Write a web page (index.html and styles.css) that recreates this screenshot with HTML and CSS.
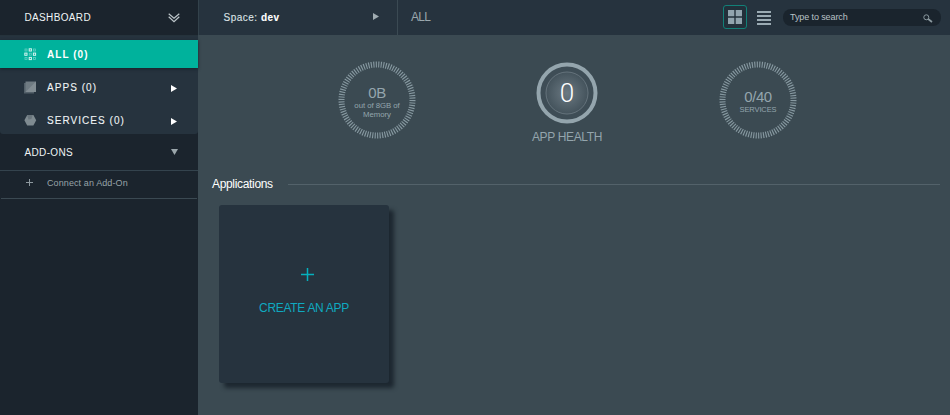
FILE: index.html
```html
<!DOCTYPE html>
<html lang="en">
<head>
<meta charset="utf-8">
<title>Dashboard</title>
<link rel="stylesheet" href="styles.css">
</head>
<body>
<div class="app">
  <nav class="sidebar">
    <div class="side-head">
      <span class="side-title">DASHBOARD</span>
      <svg class="chevrons" width="12" height="10" viewBox="0 0 12 10"><path d="M.7 .8 6 5.300 11.300 .8M.7 3.800 6 8.600 11.300 3.800"/></svg>
    </div>
    <div class="side-group">
      <a class="item active">
        <svg class="item-icon" width="13" height="13" viewBox="0 0 13 13">
          <g fill="none" stroke="#62cfc2" stroke-width=".8"><rect x="1" y="1" width="2" height="2"/><rect x="9.500" y="1" width="2" height="2"/><rect x="5.300" y="5.200" width="2" height="2"/><rect x="1" y="9.500" width="2" height="2"/><rect x="9.500" y="9.500" width="2" height="2"/></g>
          <g fill="none" stroke="#d5f5f1"><rect x="5.200" y=".8" width="2.200" height="2.200"/><rect x=".8" y="5.100" width="2.200" height="2.200"/><rect x="9.400" y="5.100" width="2.200" height="2.200"/><rect x="5.200" y="9.400" width="2.200" height="2.200"/></g>
        </svg>
        <span class="label">ALL (0)</span>
      </a>
      <a class="item">
        <svg class="item-icon" width="13" height="13" viewBox="0 0 13 13"><path fill="#536069" d="M0 2h2v9h8v1.500H0z"/><path fill="#6f7b82" d="M1.500 .5H12V11H1.500z"/><path fill="#828d93" d="M12 .5V11H1.500z"/></svg>
        <span class="label">APPS (0)</span>
        <svg class="arrow" width="6" height="7" viewBox="0 0 6 7"><path d="M0 0 6 3.500 0 7z"/></svg>
      </a>
      <a class="item">
        <svg class="item-icon" width="13" height="13" viewBox="0 0 13 13"><path fill="#7f8b91" d="M3.200 1h6.200l2.800 5.300L9.400 11.500H3.200L.4 6.300z"/><path fill="#69757c" d="M3.200 1h5.600L7.300 5 4.500 5.500 3.500 2.500z"/></svg>
        <span class="label">SERVICES (0)</span>
        <svg class="arrow" width="6" height="7" viewBox="0 0 6 7"><path d="M0 0 6 3.500 0 7z"/></svg>
      </a>
    </div>
    <div class="addons">
      <span class="side-title">ADD-ONS</span>
      <svg class="down" width="7" height="6" viewBox="0 0 7 6"><path d="M0 0h7L3.500 6z"/></svg>
    </div>
    <a class="connect">
      <svg width="7" height="7" viewBox="0 0 7 7"><path d="M3.500 0v7M0 3.500h7"/></svg>
      <span>Connect an Add-On</span>
    </a>
  </nav>
  <div class="main">
    <header class="topbar">
      <div class="space">
        <span class="space-name">Space: <b>dev</b></span>
        <svg width="6" height="7" viewBox="0 0 6 7"><path fill="#a0acb1" d="M0 0 6 3.500 0 7z"/></svg>
      </div>
      <span class="crumb">ALL</span>
      <button class="grid-btn" aria-label="Grid view"><svg width="14" height="14" viewBox="0 0 14 14"><path fill="#91a4ae" d="M0 0h6.300v6.300H0zM7.700 0H14v6.300H7.700zM0 7.700h6.300V14H0zM7.700 7.700H14V14H7.700z"/></svg></button>
      <svg class="list" width="14" height="14" viewBox="0 0 14 14"><path fill="#9babb3" d="M0 0h14v2H0zM0 4h14v2H0zM0 8h14v2H0zM0 12h14v2H0z"/></svg>
      <div class="search">
        <span>Type to search</span>
        <svg width="10" height="9" viewBox="0 0 10 9"><circle cx="3.300" cy="3.300" r="2.500"/><path d="M5.200 5 9 8" stroke-width="1.700"/></svg>
      </div>
    </header>
    <section class="stats">
      <div class="gauge">
        <svg width="78" height="78" viewBox="0 0 78 78"><circle class="ticks" cx="39" cy="39" r="35.500" pathLength="180"/></svg>
        <div class="gauge-text"><strong>0B</strong><span>out of 8GB of<br>Memory</span></div>
      </div>
      <div class="health">
        <div class="health-ring">
          <svg width="62" height="62" viewBox="0 0 62 62">
            <defs><radialGradient id="glow"><stop offset="0" stop-color="#6b7982"/><stop offset="1" stop-color="#44535c"/></radialGradient></defs>
            <circle cx="31" cy="31" r="28.500" fill="#3e4d56" stroke="#94a5ad" stroke-width="4"/>
            <circle cx="31" cy="31" r="21" fill="url(#glow)" stroke="#65737c"/>
          </svg>
          <span class="health-num">0</span>
        </div>
        <span class="health-label">APP HEALTH</span>
      </div>
      <div class="gauge services">
        <svg width="78" height="78" viewBox="0 0 78 78"><circle class="ticks" cx="39" cy="39" r="35.500" pathLength="180"/></svg>
        <div class="gauge-text"><strong>0/40</strong><span>SERVICES</span></div>
      </div>
    </section>
    <h2 class="section-title">Applications</h2>
    <a class="card">
      <svg width="13" height="13" viewBox="0 0 13 13"><path d="M6.500 0v13M0 6.500h13"/></svg>
      <span>CREATE AN APP</span>
    </a>
  </div>
</div>
</body>
</html>
```
FILE: styles.css
```css
* { box-sizing: border-box; }
body {
  margin: 0;
  font-family: "Liberation Sans", Arial, sans-serif;
  background: #3b4a52;
  overflow: hidden;
}
svg { display: block; flex: none; }
.app { display: flex; height: 415px; }

.sidebar { width: 198px; flex: none; background: #1b242d; color: #f0f4f5; }
.side-head {
  display: flex; align-items: center; justify-content: space-between;
  height: 35px; padding: 0 18px 0 24.500px;
}
.side-title { font-size: 10px; letter-spacing: .35px; line-height: 12px; }
.chevrons path { fill: none; stroke: #bdc6ca; stroke-width: 1.200; }
.side-group {
  height: 99px; padding-top: 5px;
  background: #26333e; border-top: 1px solid #25323b; border-radius: 0 0 3px 3px;
}
.item {
  display: flex; align-items: center; height: 33px;
  padding: 0 21px 0 24px; font-size: 10px; letter-spacing: 1.050px;
}
.item .label { margin-left: 10px; flex: 1; padding-bottom: 1px; -webkit-text-stroke: .1px; }
.item.active {
  height: 28px; margin-top: -1px; margin-bottom: 3px;
  background: #00b29c; color: #fff; box-shadow: 0 1px 3px #17212a; font-weight: bold;
}
.item.active .label { padding: 1px 0 0; -webkit-text-stroke: 0; }
.arrow { margin-top: 2px; }
.arrow path { fill: #fff; }
.addons {
  display: flex; align-items: center; justify-content: space-between;
  height: 37px; padding: 0 20px 0 24.500px; border-bottom: 1px solid #34434d;
}
.addons .side-title { padding-top: 2px; }
.down path { fill: #9ba6ab; }
.connect {
  display: flex; align-items: center; gap: 14px; height: 28px;
  margin: 0 1px; padding: 0 0 4px 25px; border-bottom: 1px solid #3b4952;
  font-size: 9px; color: #97a3a8; letter-spacing: .1px;
}
.connect path { stroke: #8e999f; }

.main { flex: 1; min-width: 0; }
.topbar {
  display: flex; align-items: center; height: 35px;
  background: #26333e; border-left: 1px solid #33424b;
}
.space {
  display: flex; align-items: center; justify-content: space-between;
  width: 199px; height: 35px; padding: 0 18px 2px 24.500px; border-right: 1px solid #3b4a53;
}
.space-name { font-size: 10px; letter-spacing: .5px; color: #dde4e6; padding-top: 2px; -webkit-text-stroke: .1px; }
.space-name b { color: #fff; }
.crumb { flex: 1; padding-left: 13px; font-size: 12px; letter-spacing: -.7px; color: #9aa7ad; padding-bottom: 1px; }
.grid-btn {
  display: grid; place-items: center; width: 24px; height: 24px; padding: 0; margin: 0 10px 1px 0;
  background: #22303a; border: 1px solid #128078; border-radius: 3px;
}
.search {
  display: flex; align-items: center; justify-content: space-between;
  width: 158px; height: 17px; margin: 0 9px 0 12px; padding: 0 8px 0 7px;
  background: #1a242d; border-radius: 8px; font-size: 9px; letter-spacing: -.1px; color: #b8c2c6;
}
.search span { padding-bottom: 1px; }
.search svg { margin-top: 2px; fill: none; stroke: #8b999f; }

.stats { display: flex; align-items: flex-start; height: 140px; padding: 26px 0 0 140px; }
.gauge, .health-ring { display: grid; place-items: center; }
.gauge > *, .health-ring > * { grid-area: 1 / 1; }
.ticks { fill: none; stroke: #8799a1; stroke-width: 6; stroke-dasharray: .9 1.100; }
.gauge-text {
  padding-top: 2px; text-align: center; color: #94a5ad;
  font-size: 7.800px; line-height: 9px; letter-spacing: -.05px;
}
.gauge-text strong { display: block; font-size: 15px; line-height: 17px; font-weight: normal; letter-spacing: -.4px; }
.health { display: flex; flex-direction: column; align-items: center; width: 100px; margin: 1px 0 0 101px; color: #94a5ad; }
.health-num { color: #fff; font-size: 26px; font-family: Roboto, sans-serif; font-weight: 300; }
.health-label { font-size: 12px; line-height: 14px; letter-spacing: -.35px; margin-top: 6px; white-space: nowrap; }
.services { margin-left: 102px; }
.services .gauge-text { padding-top: 1px; font-size: 7.500px; letter-spacing: -.1px; }

.section-title {
  display: flex; align-items: center; gap: 15px; margin: 2px 10px 0 14px;
  font-size: 12px; line-height: 15px; font-weight: normal; letter-spacing: -.33px; color: #fff;
}
.section-title::after { content: ""; flex: 1; height: 1px; background: #53626a; }
.card {
  display: flex; flex-direction: column; align-items: center;
  width: 170px; height: 178px; margin: 13px 0 0 21px; padding-top: 63px;
  background: #26333e; border-radius: 3px; box-shadow: 5px 5px 4px #1d2730;
  color: #0fa9c0; font-size: 12px; line-height: 14px; letter-spacing: -.3px;
}
.card svg { margin-left: 6px; }
.card path { stroke: #05b0bd; stroke-width: 1.500; }
.card span { margin-top: 20px; }
```
